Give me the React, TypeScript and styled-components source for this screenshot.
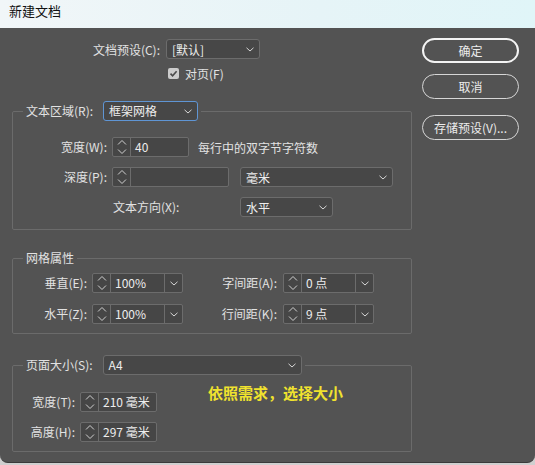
import React from 'react';
import styled, { createGlobalStyle } from 'styled-components';

const GlobalStyle = createGlobalStyle`
  html, body {
    margin: 0;
    padding: 0;
    background: #cfcfcf;
  }
  body {
    font-family: "Noto Sans CJK SC", "Noto Sans", sans-serif;
    font-size: 12px;
  }
  * { box-sizing: border-box; }
`;

const Window = styled.div`
  width: 535px;
  height: 463px;
  background: #535353;
  border-bottom: 1px solid #3a3a3a;
  border-radius: 0 0 8px 8px;
  overflow: hidden;
  display: flex;
  flex-direction: column;
  color: #e2e2e2;
`;

const TitleBar = styled.div`
  height: 28px;
  flex: none;
  padding-left: 9px;
  line-height: 22px;
  font-size: 13px;
  color: #111;
  background: linear-gradient(90deg, #f1f6f8 0%, #e6f4f7 60%, #e0f5f8 100%);
`;

const Body = styled.div`
  display: flex;
  padding: 10px 0 0 12px;
`;

const LeftColumn = styled.div`
  width: 400px;
  display: flex;
  flex-direction: column;
`;

const RightColumn = styled.div`
  margin-left: 10px;
  width: 97px;
  display: flex;
  flex-direction: column;
`;

const PillButton = styled.button<{ $primary?: boolean; $gap?: number }>`
  height: 25px;
  margin-top: ${(p) => p.$gap ?? 0}px;
  border-radius: 13px;
  border: ${(p) => (p.$primary ? '2px solid #f4f4f4' : '1.5px solid #d6d6d6')};
  background: transparent;
  color: #ececec;
  font-family: inherit;
  font-size: 12px;
  padding: 0;
  cursor: default;
`;

const PresetRow = styled.div`
  display: flex;
  align-items: center;
  height: 20px;
  margin-top: 1px;
`;

const PresetLabel = styled.span`
  width: 148px;
  text-align: right;
  margin-right: 6px;
`;

const CheckRow = styled.label`
  display: flex;
  align-items: center;
  height: 13px;
  margin-top: 8px;
  margin-left: 156px;
  gap: 6px;
`;

const CheckBox = styled.span`
  width: 11px;
  height: 11px;
  border-radius: 2px;
  background: #cccccc;
  display: flex;
  align-items: center;
  justify-content: center;
`;

const Group = styled.fieldset<{ $top: number }>`
  margin: ${(p) => p.$top}px 0 0 0;
  padding: 0;
  border: 1px solid #6b6b6b;
  border-radius: 2px;
  min-width: 0;
`;

const Legend = styled.legend`
  margin-left: 10px;
  padding: 0 3px;
  line-height: 16px;
`;

const LegendInner = styled.div`
  display: flex;
  align-items: center;
  gap: 10px;
`;

const GroupContent = styled.div<{ $pt: number; $pb: number; $cols: string; $rowGap: number }>`
  position: relative;
  display: grid;
  grid-template-columns: ${(p) => p.$cols};
  grid-auto-rows: 20px;
  row-gap: ${(p) => p.$rowGap}px;
  align-items: center;
  padding: ${(p) => p.$pt}px 0 ${(p) => p.$pb}px 0;
`;

const FieldLabel = styled.span<{ $col?: string; $left?: boolean }>`
  grid-column: ${(p) => p.$col ?? 'auto'};
  text-align: ${(p) => (p.$left ? 'left' : 'right')};
  padding-left: ${(p) => (p.$left ? '1px' : '0')};
  white-space: nowrap;
  line-height: 20px;
`;

const Cell = styled.div<{ $col?: string }>`
  grid-column: ${(p) => p.$col ?? 'auto'};
  display: flex;
  align-items: center;
`;

const Note = styled.span`
  margin-left: 9px;
  white-space: nowrap;
`;

const SelectBox = styled.div<{ $w: number; $focus?: boolean }>`
  width: ${(p) => p.$w}px;
  height: 20px;
  display: flex;
  align-items: center;
  justify-content: space-between;
  padding: 0 5px 0 5px;
  background: #474747;
  border: 1px solid ${(p) => (p.$focus ? '#5f95d4' : '#6c6c6c')};
  border-radius: 3px;
  color: #ededed;
  white-space: nowrap;
`;

const SpinField = styled.div<{ $w: number }>`
  width: ${(p) => p.$w}px;
  height: 20px;
  display: flex;
  background: #464646;
  border: 1px solid #6c6c6c;
  border-radius: 2px;
  color: #ededed;
`;

const SpinButtons = styled.div`
  width: 18px;
  flex: none;
  border-right: 1px solid #6c6c6c;
  display: flex;
  align-items: center;
  justify-content: center;
`;

const SpinValue = styled.div`
  flex: 1;
  padding-left: 4px;
  line-height: 18px;
  white-space: nowrap;
`;

const DropPart = styled.div`
  width: 18px;
  flex: none;
  border-left: 1px solid #6c6c6c;
  display: flex;
  align-items: center;
  justify-content: center;
`;

const Callout = styled.span`
  position: absolute;
  left: 195px;
  top: 8px;
  font-size: 15px;
  font-weight: 700;
  line-height: 20px;
  color: #f0e22e;
  white-space: nowrap;
`;

const DropChevron = () => (
  <svg width="8" height="5" viewBox="0 0 8 5">
    <path d="M0.5 0.8 L4 4 L7.5 0.8" fill="none" stroke="#d6d6d6" strokeWidth="1" />
  </svg>
);

const SpinArrows = () => (
  <svg width="10" height="18" viewBox="0 0 10 18">
    <path d="M1 6.5 L5 2.5 L9 6.5" fill="none" stroke="#d0d0d0" strokeWidth="1" />
    <path d="M1 11.5 L5 15.5 L9 11.5" fill="none" stroke="#d0d0d0" strokeWidth="1" />
  </svg>
);

const CheckMark = () => (
  <svg width="9" height="9" viewBox="0 0 9 9">
    <path d="M1.5 4.6 L3.6 6.8 L7.6 2.2" fill="none" stroke="#4a4a4a" strokeWidth="1.6" />
  </svg>
);

const Select = ({ w, value, focus }: { w: number; value: string; focus?: boolean }) => (
  <SelectBox $w={w} $focus={focus}>
    <span>{value}</span>
    <DropChevron />
  </SelectBox>
);

const Spin = ({ w, value, drop }: { w: number; value: string; drop?: boolean }) => (
  <SpinField $w={w}>
    <SpinButtons>
      <SpinArrows />
    </SpinButtons>
    <SpinValue>{value}</SpinValue>
    {drop && (
      <DropPart>
        <DropChevron />
      </DropPart>
    )}
  </SpinField>
);

export default function App() {
  return (
    <>
      <GlobalStyle />
      <Window>
        <TitleBar>新建文档</TitleBar>
        <Body>
          <LeftColumn>
            <PresetRow>
              <PresetLabel>文档预设(C):</PresetLabel>
              <Select w={94} value="[默认]" />
            </PresetRow>
            <CheckRow>
              <CheckBox>
                <CheckMark />
              </CheckBox>
              <span>对页(F)</span>
            </CheckRow>

            <Group $top={21}>
              <Legend>
                <LegendInner>
                  <span>文本区域(R):</span>
                  <Select w={95} value="框架网格" focus />
                </LegendInner>
              </Legend>
              <GroupContent $pt={16} $pb={12} $cols="94px 5px 117px 11px 153px" $rowGap={10}>
                <FieldLabel $col="1">宽度(W):</FieldLabel>
                <Cell $col="3 / 6">
                  <Spin w={77} value="40" />
                  <Note>每行中的双字节字符数</Note>
                </Cell>
                <FieldLabel $col="1">深度(P):</FieldLabel>
                <Cell $col="3">
                  <Spin w={117} value="" />
                </Cell>
                <Cell $col="5">
                  <Select w={153} value="毫米" />
                </Cell>
                <FieldLabel $col="3" $left>
                  文本方向(X):
                </FieldLabel>
                <Cell $col="5">
                  <Select w={93} value="水平" />
                </Cell>
              </GroupContent>
            </Group>

            <Group $top={20}>
              <Legend>网格属性</Legend>
              <GroupContent $pt={7} $pb={9} $cols="74px 5px 91px 94px 6px 91px" $rowGap={11}>
                <FieldLabel $col="1">垂直(E):</FieldLabel>
                <Cell $col="3">
                  <Spin w={91} value="100%" drop />
                </Cell>
                <FieldLabel $col="4">字间距(A):</FieldLabel>
                <Cell $col="6">
                  <Spin w={91} value="0 点" drop />
                </Cell>
                <FieldLabel $col="1">水平(Z):</FieldLabel>
                <Cell $col="3">
                  <Spin w={91} value="100%" drop />
                </Cell>
                <FieldLabel $col="4">行间距(K):</FieldLabel>
                <Cell $col="6">
                  <Spin w={91} value="9 点" drop />
                </Cell>
              </GroupContent>
            </Group>

            <Group $top={21}>
              <Legend>
                <LegendInner>
                  <span>页面大小(S):</span>
                  <Select w={199} value="A4" />
                </LegendInner>
              </Legend>
              <GroupContent $pt={17} $pb={9} $cols="62px 5px 77px" $rowGap={10}>
                <FieldLabel $col="1">宽度(T):</FieldLabel>
                <Cell $col="3">
                  <Spin w={77} value="210 毫米" />
                </Cell>
                <FieldLabel $col="1">高度(H):</FieldLabel>
                <Cell $col="3">
                  <Spin w={77} value="297 毫米" />
                </Cell>
                <Callout>依照需求，选择大小</Callout>
              </GroupContent>
            </Group>
          </LeftColumn>

          <RightColumn>
            <PillButton $primary>确定</PillButton>
            <PillButton $gap={11}>取消</PillButton>
            <PillButton $gap={16}>存储预设(V)...</PillButton>
          </RightColumn>
        </Body>
      </Window>
    </>
  );
}
